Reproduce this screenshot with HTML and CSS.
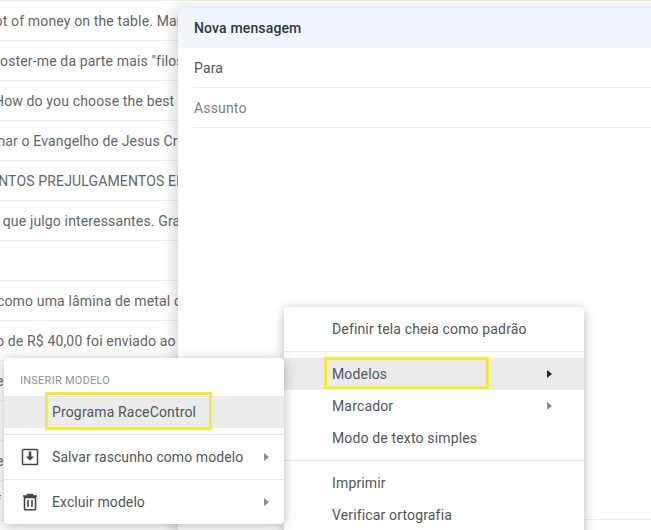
FILE: index.html
```html
<!DOCTYPE html>
<html lang="pt-BR">
<head>
<meta charset="utf-8">
<title>Nova mensagem</title>
<link rel="stylesheet" href="styles.css">
</head>
<body>
<div class="screen">
  <div class="mail-list">
    <div class="mail-row"><span class="snippet s1">lot of money on the table. Many</span></div>
    <div class="mail-row"><span class="snippet s2">poster-me da parte mais "filosófica"</span></div>
    <div class="mail-row"><span class="snippet s3">How do you choose the best</span></div>
    <div class="mail-row"><span class="snippet s4">ensinar o Evangelho de Jesus Cristo</span></div>
    <div class="mail-row"><span class="snippet s5">QUANTOS PREJULGAMENTOS EM</span></div>
    <div class="mail-row"><span class="snippet s6">o que julgo interessantes. Gratidão</span></div>
    <div class="mail-row"></div>
    <div class="mail-row"><span class="snippet s7">como uma lâmina de metal que</span></div>
    <div class="mail-row"><span class="snippet s8">o de R$ 40,00 foi enviado ao seu</span></div>
    <div class="mail-row"><span class="snippet s9">e</span></div>
    <div class="mail-row"></div>
    <div class="mail-row"><span class="snippet s9">e</span></div>
    <div class="mail-row"><span class="snippet s9">f</span></div>
  </div>

  <section class="compose">
    <header class="compose-head">Nova mensagem</header>
    <div class="compose-field">Para</div>
    <div class="compose-field muted">Assunto</div>
  </section>
  <div class="compose-edge"></div>

  <nav class="menu menu-options">
    <div class="item">Definir tela cheia como padrão</div>
    <hr class="sep sep-a">
    <div class="item hover">Modelos
      <svg class="arrow dark" viewBox="0 0 5 8"><path d="M0 0l5 4-5 4z"/></svg>
    </div>
    <div class="item">Marcador
      <svg class="arrow" viewBox="0 0 5 8"><path d="M0 0l5 4-5 4z"/></svg>
    </div>
    <div class="item">Modo de texto simples</div>
    <hr class="sep sep-b">
    <div class="item">Imprimir</div>
    <div class="item">Verificar ortografia</div>
  </nav>

  <nav class="menu menu-templates">
    <div class="menu-label">INSERIR MODELO</div>
    <div class="tpl-item hover">Programa RaceControl</div>
    <hr class="sep sep-c">
    <div class="tpl-item tall">
      <svg class="tpl-icon" viewBox="0 0 18 18"><path d="M2.600 1.500h12.800a1.100 1.100 0 0 1 1.100 1.100v12.800a1.100 1.100 0 0 1-1.100 1.100H2.600a1.100 1.100 0 0 1-1.100-1.100V2.600a1.100 1.100 0 0 1 1.100-1.100z" fill="none" stroke="#444746" stroke-width="1.500"/><path d="M7.700 3.500h2.600v5h2.700L9 12.800 5 8.500h2.700z" fill="#444746"/></svg>
      <span class="tpl-text">Salvar rascunho como modelo</span>
      <svg class="arrow" viewBox="0 0 5 8"><path d="M0 0l5 4-5 4z"/></svg>
    </div>
    <hr class="sep sep-d">
    <div class="tpl-item tall">
      <svg class="tpl-icon" viewBox="0 0 18 18"><path d="M3.500 4.500h11V16a.8.8 0 0 1-.8.8H4.300a.8.8 0 0 1-.8-.8zM2 3h14M6.500 3V1.500h5V3M7 7v7M11 7v7" fill="none" stroke="#444746" stroke-width="1.600"/></svg>
      <span class="tpl-text">Excluir modelo</span>
      <svg class="arrow" viewBox="0 0 5 8"><path d="M0 0l5 4-5 4z"/></svg>
    </div>
  </nav>

  <div class="mark mark-models"></div>
  <div class="mark mark-program"></div>
</div>
</body>
</html>
```
FILE: styles.css
```css
* { box-sizing: border-box; }
html, body { margin: 0; padding: 0; background: #fff; }
body { font-family: Roboto, "Liberation Sans", sans-serif; font-size: 14px; color: #5f6368; letter-spacing: .15px; }
.screen { position: relative; width: 651px; height: 530px; overflow: hidden; background: #fff; }

.mail-list { border-top: 1px solid #eceeee; }
.mail-row { height: 40px; display: flex; align-items: center; border-bottom: 1px solid #eceeee; white-space: nowrap; padding-top: 1px; }
.snippet { display: block; width: 178px; overflow: hidden; color: #62666a; }
.s1 { text-indent: -9px; }
.s2 { text-indent: -8px; }
.s3 { text-indent: -6px; }
.s4 { text-indent: -29px; }
.s5 { text-indent: -30px; }
.s6 { text-indent: -9px; }
.s7 { text-indent: -3px; }
.s8 { text-indent: -4px; }
.s9 { text-indent: -4px; }

.compose { position: absolute; left: 178px; top: 8px; width: 490px; height: 540px; background: #fff; box-shadow: -4px 0 14px rgba(0,0,0,.16); border-radius: 8px 0 0 0; }
.compose-head { height: 40px; background: #f1f5fc; color: #2a3846; font-weight: 500; padding-left: 16px; line-height: 40px; border-radius: 8px 0 0 0; letter-spacing: .15px; }
.compose-field { height: 40px; margin-left: 16px; border-bottom: 1px solid #e8e9ea; line-height: 41px; color: #50555a; }
.compose-field.muted { color: #7b7f83; }
.compose-edge { position: absolute; left: 584px; top: 519px; width: 67px; height: 11px; border-top: 1px solid #eceeee; background: #fff; }

.menu { position: absolute; background: #fff; border-radius: 4px; box-shadow: 0 2px 12px rgba(0,0,0,.28); color: #50555a; }
.menu-options { left: 284px; top: 307px; width: 300px; height: 240px; padding-top: 6px; }
.item { position: relative; height: 32px; line-height: 32px; padding-left: 48px; }
.item.hover, .tpl-item.hover { background: #ebebeb; }
.sep { border: 0; border-top: 1px solid #e6e6e6; margin: 0; }
.sep-a { margin: 6px 0; }
.sep-b { margin: 6px 0 6px; }
.sep-c { margin: 6px 0 0; }
.sep-d { margin: 0; }
.arrow { position: absolute; right: 32px; top: 12px; width: 5px; height: 8px; fill: #8a8c8e; }
.arrow.dark { fill: #202124; }

.menu-templates { left: 4px; top: 358px; width: 280px; height: 166px; padding-top: 12px; }
.menu-label { height: 26px; line-height: 22px; padding-left: 16px; font-size: 11px; letter-spacing: .25px; color: #8a8e92; }
.tpl-item { position: relative; height: 32px; line-height: 32px; padding-left: 48px; }
.tpl-item.tall { height: 44px; display: flex; align-items: center; letter-spacing: .08px; }
.tpl-item.tall .arrow { top: 18px; right: 15px; }
.tpl-icon { position: absolute; left: 17px; top: 13px; width: 18px; height: 18px; }

.mark { position: absolute; border: 3px solid #f5ea3c; }
.mark-models { left: 324px; top: 357px; width: 165px; height: 32px; }
.mark-program { left: 45px; top: 392px; width: 167px; height: 38px; }
```
